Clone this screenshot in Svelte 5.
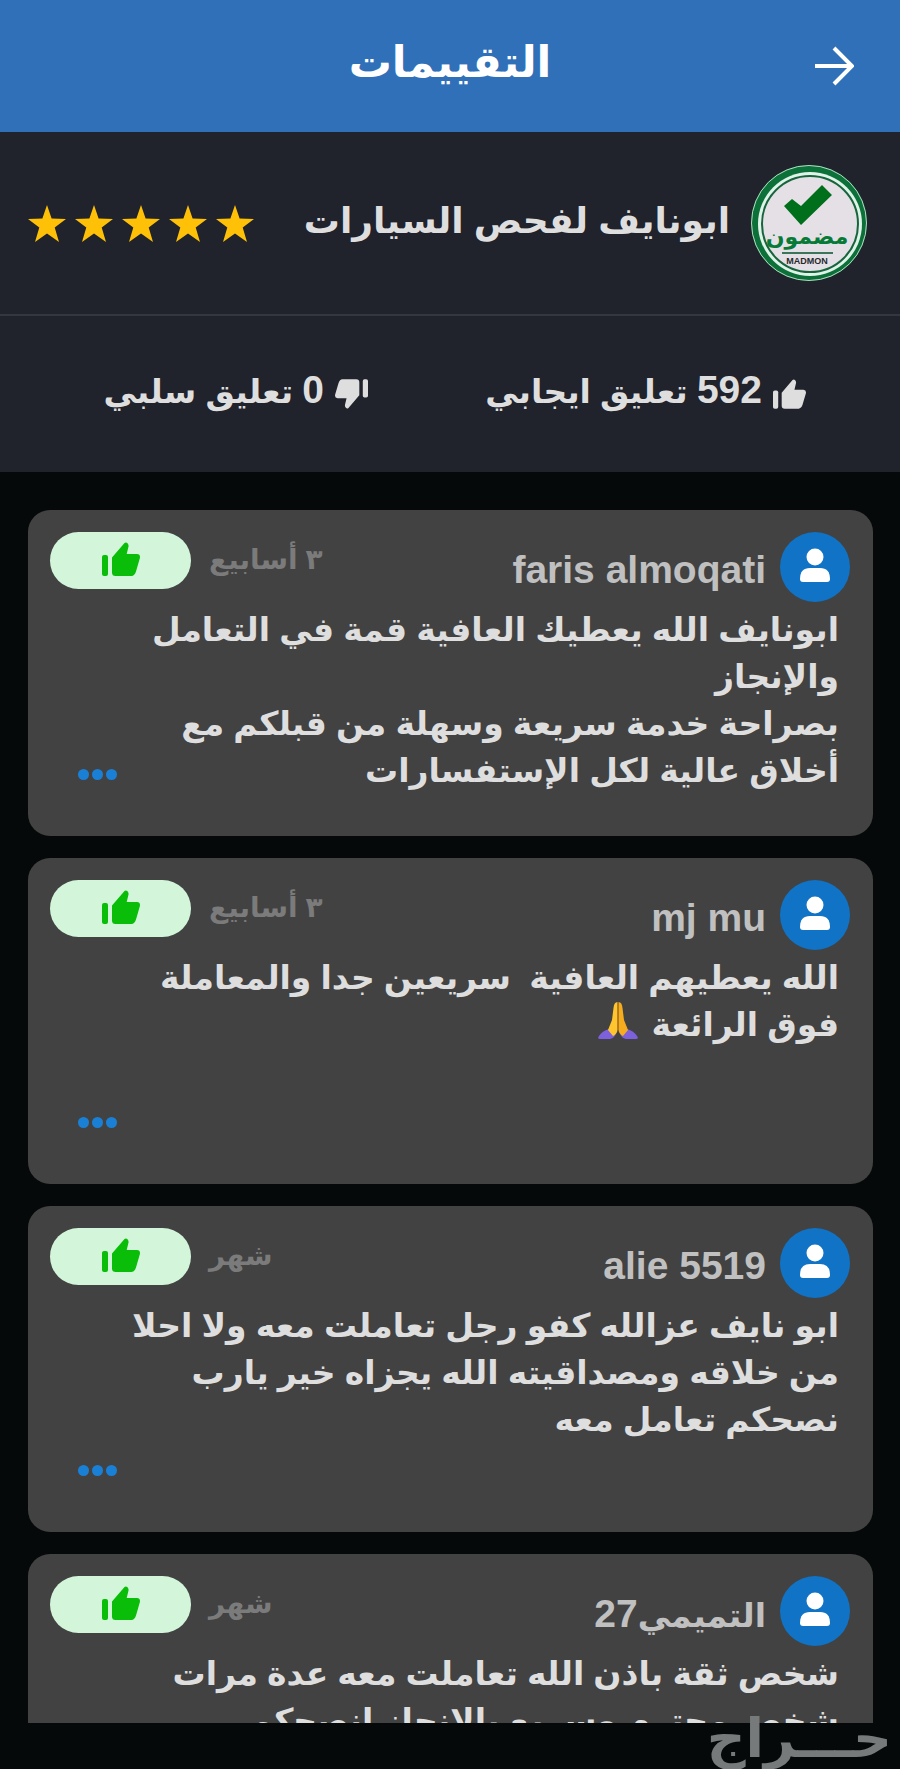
<script>
  const reviews = [
    {
      name: 'faris almoqati',
      time: '٣ أسابيع',
      text: 'ابونايف الله يعطيك العافية قمة في التعامل\nوالإنجاز\nبصراحة خدمة سريعة وسهلة من قبلكم مع\nأخلاق عالية لكل الإستفسارات'
    },
    {
      name: 'mj mu',
      time: '٣ أسابيع',
      text: 'الله يعطيهم العافية  سريعين جدا والمعاملة\nفوق الرائعة ',
      prayer: true
    },
    {
      name: 'alie 5519',
      time: 'شهر',
      text: 'ابو نايف عزالله كفو رجل تعاملت معه ولا احلا\nمن خلاقه ومصداقيته الله يجزاه خير يارب\nنصحكم تعامل معه'
    },
    {
      arabicName: 'التميمي',
      name: '27',
      time: 'شهر',
      text: 'شخص ثقة باذن الله تعاملت معه عدة مرات\nشخص محترم وسريع بالانجاز انصحكم'
    }
  ];
</script>

{#snippet thumb()}
  <svg class="thumb" viewBox="0 0 38 34" aria-hidden="true">
    <rect x="0" y="13" width="6" height="21" rx="2" />
    <path d="M10 15.500L22.500 1Q24 -.3 25.500 1.200Q27 2.600 26.400 5L24.700 12H35Q38.500 12.300 37.900 16L34 29.500Q32.500 33.800 29.500 34H13.500Q10 34 10 30.500Z" />
  </svg>
{/snippet}

<div class="page" dir="rtl">
  <header>
    <button class="back" aria-label="رجوع">
      <svg viewBox="0 0 40 40" aria-hidden="true">
        <path d="M1 20H37M20 2L38 20L20 38" />
      </svg>
    </button>
    <h1>التقييمات</h1>
  </header>

  <section class="profile">
    <svg class="seal" viewBox="0 0 118 118" role="img" aria-label="مضمون">
      <circle cx="59" cy="59" r="58" fill="#0b7138" />
      <circle cx="59" cy="59" r="57.500" fill="none" stroke="#b5d8c4" stroke-width="1" />
      <circle cx="60" cy="60" r="52" fill="#e0f3e9" />
      <circle cx="60" cy="60" r="48" fill="#e5e0e6" stroke="#17653d" stroke-width="2" />
      <path d="M34 42L42 35L51 42L72 21L82 31L51 61Z" fill="#006f1b" />
      <text x="57" y="80" font-size="22" fill="#087a37" class="seal-name">مضمون</text>
      <path d="M32 89H83" stroke="#3b755a" stroke-width="2" />
      <text x="57" y="100" font-size="9" fill="#272a2d" class="seal-latin">MADMON</text>
    </svg>
    <h2>ابونايف لفحص السيارات</h2>
    <div class="stars" role="img" aria-label="5 / 5">
      {#each Array(5) as _}
        <svg viewBox="0 0 38 37" aria-hidden="true">
          <path d="M19 0L23.600 13.500L38 14L26.700 22.500L31 37L19 28.500L7 37L11.300 22.500L0 14L14.400 13.500Z" />
        </svg>
      {/each}
    </div>
  </section>

  <section class="totals">
    <div>{@render thumb()}<span class="total"><b>592</b> تعليق ايجابي</span></div>
    <div><span class="down">{@render thumb()}</span><span class="total"><b>0</b> تعليق سلبي</span></div>
  </section>

  <main>
    {#each reviews as review}
      <article>
        <div class="head">
          <svg class="avatar" viewBox="0 0 70 70" aria-hidden="true">
            <circle cx="35" cy="35" r="35" fill="#1073c5" />
            <circle cx="35" cy="25" r="8.500" fill="#fff" />
            <path d="M20 47Q20 36 30 36H40Q50 36 50 47Q50 50 47 50H23Q20 50 20 47Z" fill="#fff" />
          </svg>
          <h3>{#if review.arabicName}<span class="arabic">{review.arabicName}</span>{/if}<bdi>{review.name}</bdi></h3>
          <time>{review.time}</time>
          <span class="pill">{@render thumb()}</span>
        </div>
        <div class="body">
          <p>{review.text}{#if review.prayer}<svg class="prayer" viewBox="0 0 40 38" role="img" aria-label="🙏">
              <path d="M11 27Q4 29 1 34Q-1 37 2 37H12Q17 36 18 31Z" fill="#7d60dc" />
              <path d="M29 27Q36 29 39 34Q41 37 38 37H28Q23 36 22 31Z" fill="#7d60dc" />
              <path d="M19.500 0Q16 0 15.500 6L14 18L10 28L15 34Q19 32 19.500 28Z" fill="#ffc52e" />
              <path d="M20.500 0Q24 0 24.500 6L26 18L30 28L25 34Q21 32 20.500 28Z" fill="#f5ad1e" />
              <path d="M20 2V28" stroke="#c47b0d" stroke-width="1" />
            </svg>{/if}</p>
          <button class="more" aria-label="المزيد"><i></i><i></i><i></i></button>
        </div>
      </article>
    {/each}
  </main>

  <footer><span>حـــراج</span></footer>
</div>

<style>
  :global(body) {
    margin: 0;
    background: #060909;
  }

  .page {
    display: flex;
    flex-direction: column;
    height: 100vh;
    color: #dedede;
    font-family: 'Liberation Sans', 'DejaVu Sans', sans-serif;
    font-weight: 700;
  }

  h1, h2, h3, p {
    margin: 0;
  }

  button {
    border: 0;
    padding: 0;
    background: none;
    cursor: pointer;
  }

  svg {
    display: block;
    flex: none;
  }

  header {
    display: grid;
    grid-template-columns: 40px 1fr 40px;
    align-items: center;
    flex: none;
    height: 132px;
    padding: 0 46px;
    background: #3070b9;
    color: #fff;
  }

  .back svg {
    width: 40px;
    height: 40px;
    fill: none;
    stroke: #fff;
    stroke-width: 4;
  }

  h1 {
    font-size: 43px;
    line-height: 60px;
    padding-bottom: 8px;
    text-align: center;
  }

  .profile {
    display: flex;
    align-items: center;
    flex: none;
    height: 182px;
    padding: 0 32px 0 28px;
    background: #20222c;
    border-bottom: 2px solid #353640;
  }

  .seal {
    width: 118px;
    height: 118px;
  }

  .seal-name {
    font-family: 'DejaVu Sans', sans-serif;
    text-anchor: middle;
  }

  .seal-latin {
    text-anchor: middle;
    direction: ltr;
  }

  h2 {
    flex: 1;
    padding: 0 20px 4px 0;
    font-size: 36px;
    line-height: 48px;
    white-space: nowrap;
  }

  .stars {
    display: flex;
    gap: 9px;
  }

  .stars svg {
    width: 38px;
    height: 37px;
    fill: #ffc107;
  }

  .totals {
    display: grid;
    grid-template-columns: 438fr 368fr;
    align-items: center;
    flex: none;
    height: 156px;
    padding-right: 94px;
    background: #20222c;
    font-size: 33px;
    line-height: 48px;
  }

  .totals div {
    display: flex;
    align-items: center;
    gap: 11px;
    white-space: nowrap;
  }

  .total {
    padding-bottom: 6px;
  }

  .total b {
    font-size: 39px;
  }

  .totals .thumb {
    width: 33px;
    height: 30px;
    fill: #dedede;
  }

  .down {
    transform: rotate(180deg);
  }

  main {
    display: flex;
    flex-direction: column;
    gap: 22px;
    flex: 1;
    min-height: 0;
    padding: 38px 27px 0 28px;
    overflow-y: auto;
    scrollbar-width: none;
  }

  article {
    flex: none;
    box-sizing: border-box;
    min-height: 326px;
    padding: 22px 23px 22px 22px;
    border-radius: 22px;
    background: #424242;
  }

  .head {
    display: flex;
    align-items: flex-start;
  }

  .avatar {
    width: 70px;
    height: 70px;
  }

  h3 {
    flex: 1;
    padding: 14px 14px 0 0;
    color: #c0c0c0;
    font-size: 39px;
    line-height: 48px;
  }

  .arabic {
    font-size: 33px;
  }

  time {
    padding: 4px 0 0 18px;
    color: #7b7b7b;
    font-size: 28px;
    line-height: 48px;
  }

  .pill {
    display: flex;
    justify-content: center;
    align-items: flex-start;
    box-sizing: border-box;
    width: 141px;
    height: 57px;
    padding-top: 10px;
    border-radius: 29px;
    background: #d3f6db;
  }

  .pill .thumb {
    width: 38px;
    height: 34px;
    fill: #09bd09;
  }

  .body {
    display: flex;
    align-items: flex-start;
    min-height: 188px;
    padding: 4px 11px 0 28px;
  }

  p {
    flex: 1;
    min-width: 0;
    font-size: 33px;
    line-height: 47px;
    white-space: pre;
  }

  .prayer {
    display: inline-block;
    width: 40px;
    height: 38px;
    margin-right: 4px;
    vertical-align: -4px;
  }

  .more {
    display: flex;
    gap: 3px;
    align-self: flex-end;
    padding-bottom: 14px;
  }

  .more i {
    width: 11px;
    height: 11px;
    border-radius: 50%;
    background: #1a80d6;
  }

  footer {
    display: flex;
    align-items: flex-end;
    flex: none;
    height: 46px;
    padding: 0 8px;
  }

  footer span {
    position: relative;
    color: #777a7b;
    font-family: 'DejaVu Sans', sans-serif;
    font-size: 54px;
    line-height: 60px;
  }
</style>
